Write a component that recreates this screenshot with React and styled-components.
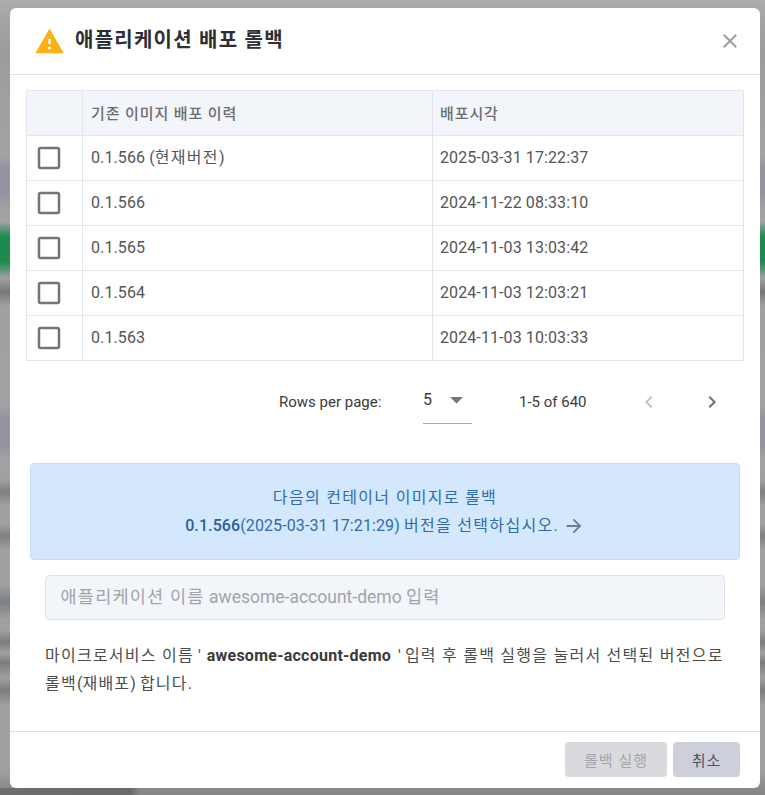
import React from "react";
import styled, { createGlobalStyle } from "styled-components";

const Global = createGlobalStyle`
  html, body { margin: 0; padding: 0; height: 100%; }
  body {
    overflow: hidden;
    font-family: Roboto, "Noto Sans CJK KR", sans-serif;
    background:
      linear-gradient(90deg, #6e6e6e 0, #6a6a6a 130px, rgba(128,128,128,0) 140px) 0 788px / 100% 7px no-repeat,
      linear-gradient(180deg,
        #acacac 0, #a5a5a5 20px, #9c9c9c 50px, #a3a3a3 155px, #9494a2 168px, #9494a2 195px, #a2a2a2 208px,
        #a2a2a2 222px, #1f8a4e 236px, #1f8a4e 262px, #a0a0a0 278px, #777 292px, #a0a0a0 306px,
        #a2a2a2 405px, #9494a2 418px, #9494a2 445px, #a2a2a2 458px, #a0a0a0 480px, #7c8084 492px, #a0a0a0 506px,
        #a0a0a0 524px, #808080 536px, #a0a0a0 550px, #a0a0a0 585px, #7c8084 602px, #a0a0a0 620px,
        #a0a0a0 630px, #7c7c7c 642px, #a0a0a0 653px, #7c7c7c 663px, #a0a0a0 678px, #7c7c7c 690px, #a0a0a0 705px,
        #a0a0a0 770px, #8a8a8a 788px, #868686 795px);
  }
`;

const Page = styled.div`
  padding: 8px 0 0 10px;
`;

const Modal = styled.div`
  width: 750px;
  height: 780px;
  background: #fff;
  border-radius: 6px;
  display: flex;
  flex-direction: column;
  color: #4a4a4a;
`;

const Header = styled.header`
  height: 67px;
  box-sizing: border-box;
  border-bottom: 1px solid #e0e0e2;
  display: flex;
  align-items: flex-start;
  padding: 18px 18px 0 24px;
  flex: none;
`;

const WarnIcon = styled.svg`
  width: 31px;
  height: 31px;
  fill: #fdb013;
  flex: none;
`;

const Title = styled.h2`
  margin: 0 0 0 10px;
  font-size: 20px;
  line-height: 28px;
  font-weight: 700;
  color: #2d2f33;
  flex: 1;
  --ko: 0.062em;
`;

const CloseIcon = styled.svg`
  width: 24px;
  height: 24px;
  fill: #9e9e9e;
  margin-top: 3px;
`;

const Body = styled.div`
  flex: 1;
  padding: 15px 16px 0;
  min-height: 0;
`;

const Table = styled.table`
  border-collapse: collapse;
  table-layout: fixed;
  width: 717px;
  font-size: 16px;
  letter-spacing: 0.1px;
  color: #555;
`;

const Th = styled.th`
  height: 45px;
  padding: 0 8px 2px;
  box-sizing: border-box;
  background: #f2f5f9;
  border: 1px solid #e3e6ea;
  text-align: left;
  font-weight: 500;
  font-size: 15px;
  color: #6a6c70;
  --ko: 0.06em;
  &:last-child { padding-left: 7px; }
`;

const Td = styled.td`
  height: 44px;
  padding: 0 8px;
  border: 1px solid #e3e6ea;
  line-height: 24px;
  &:last-child { padding-left: 7px; }
`;

const CheckCell = styled(Td)`
  padding: 0;
`;

const CheckIcon = styled.svg`
  width: 30px;
  height: 30px;
  fill: #757575;
  display: block;
  margin-left: 7px;
`;

const Pagination = styled.div`
  height: 80px;
  display: flex;
  align-items: flex-start;
  font-size: 15px;
  color: #3a3a3a;
  padding-left: 253px;
`;

const RowsLabel = styled.span`
  margin-top: 31px;
  line-height: 20px;
  width: 144px;
  flex: none;
`;

const PageSelect = styled.div`
  width: 49px;
  height: 43px;
  margin-top: 20px;
  box-sizing: border-box;
  border-bottom: 1px solid #a9a9a9;
  display: flex;
  flex: none;
  align-items: flex-start;
  padding-top: 9px;
  font-size: 16px;
  line-height: 20px;
  justify-content: space-between;
`;

const CaretIcon = styled.svg`
  width: 31px;
  height: 31px;
  fill: #757575;
  margin-top: -6px;
`;

const PageRange = styled.span`
  margin: 31px 0 0 47px;
  line-height: 20px;
  width: 118px;
  flex: none;
`;

const PagerIcon = styled.svg`
  width: 24px;
  height: 24px;
  fill: ${(p) => (p.$off ? "#c4c4c4" : "#707070")};
  margin-top: 29px;
  margin-left: ${(p) => p.$gap}px;
  flex: none;
`;

const Notice = styled.div`
  margin: 22px 4px 0;
  height: 97px;
  box-sizing: border-box;
  background: #d4e8fd;
  border: 1px solid #c2ddf8;
  border-radius: 4px;
  text-align: center;
  font-size: 16px;
  line-height: 28px;
  letter-spacing: 0.1px;
  color: #2f6cab;
  padding-top: 20px;
`;

const Strong = styled.span`
  font-weight: 500;
  color: #2a5f9b;
`;

const ArrowIcon = styled.svg`
  width: 22px;
  height: 22px;
  fill: #757a80;
  vertical-align: -6px;
  margin-left: 5px;
`;

const Field = styled.div`
  margin: 15px 19px 0;
  height: 45px;
  box-sizing: border-box;
  background: #f2f5f9;
  border: 1px solid #dfe3e8;
  border-radius: 4px;
  padding: 0 14.5px;
  font-size: 17.5px;
  line-height: 43px;
  color: #a1a4a8;
  --ko: 0.07em;
`;

const Help = styled.p`
  margin: 22px 19px 0;
  font-size: 16px;
  line-height: 28px;
  color: #4c4c4c;
  word-break: keep-all;
  --ko: 0.078em;
`;

const Bold = styled.b`
  font-weight: 700;
  color: #3a3a3a;
  letter-spacing: 0.25px;
  margin: 0 3px 0 2px;
`;

const Footer = styled.footer`
  height: 57px;
  box-sizing: border-box;
  flex: none;
  border-top: 1px solid #e0e0e2;
  display: flex;
  justify-content: flex-end;
  gap: 6px;
  padding: 10px 20px 0;
`;

const Button = styled.button`
  height: 35px;
  width: ${(p) => p.$w}px;
  border: 0;
  border-radius: 4px;
  padding: 0;
  font: 400 15px Roboto, "Noto Sans CJK KR", sans-serif;
  background: ${(p) => (p.disabled ? "#d9dadd" : "#cdd0da")};
  color: ${(p) => (p.disabled ? "#a3a5a9" : "#4a5163")};
  --ko: 0.07em;
`;

const Hangul = styled.span`
  letter-spacing: var(--ko, 0.082em);
`;

/* The Korean runs are set wider than the Latin ones in the reference. */
function T({ children }) {
  return String(children)
    .split(/([가-힣]+(?: [가-힣]+)*)/)
    .map((part, i) => (i % 2 ? <Hangul key={i}>{part}</Hangul> : part));
}

const rows = [
  ["0.1.566 (현재버전)", "2025-03-31 17:22:37"],
  ["0.1.566", "2024-11-22 08:33:10"],
  ["0.1.565", "2024-11-03 13:03:42"],
  ["0.1.564", "2024-11-03 12:03:21"],
  ["0.1.563", "2024-11-03 10:03:33"],
];

export default function App() {
  return (
    <>
      <Global />
      <Page>
        <Modal>
          <Header>
            <WarnIcon viewBox="0 0 24 24"><path d="M1 21h22L12 2 1 21zm12-3h-2v-2h2v2zm0-4h-2v-4h2v4z" /></WarnIcon>
            <Title><T>애플리케이션 배포 롤백</T></Title>
            <CloseIcon viewBox="0 0 24 24"><path d="M19 6.41 17.59 5 12 10.59 6.41 5 5 6.41 10.59 12 5 17.59 6.41 19 12 13.41 17.59 19 19 17.59 13.41 12z" /></CloseIcon>
          </Header>
          <Body>
            <Table>
              <colgroup>
                <col style={{ width: 56 }} />
                <col style={{ width: 350 }} />
                <col style={{ width: 311 }} />
              </colgroup>
              <thead>
                <tr>
                  <Th />
                  <Th><T>기존 이미지 배포 이력</T></Th>
                  <Th><T>배포시각</T></Th>
                </tr>
              </thead>
              <tbody>
                {rows.map(([version, time], i) => (
                  <tr key={i}>
                    <CheckCell>
                      <CheckIcon viewBox="0 0 24 24"><path d="M19 5v14H5V5h14m0-2H5c-1.1 0-2 .9-2 2v14c0 1.1.9 2 2 2h14c1.1 0 2-.9 2-2V5c0-1.1-.9-2-2-2z" /></CheckIcon>
                    </CheckCell>
                    <Td><T>{version}</T></Td>
                    <Td>{time}</Td>
                  </tr>
                ))}
              </tbody>
            </Table>
            <Pagination>
              <RowsLabel>Rows per page:</RowsLabel>
              <PageSelect>
                <span>5</span>
                <CaretIcon viewBox="0 0 24 24"><path d="M7 10l5 5 5-5z" /></CaretIcon>
              </PageSelect>
              <PageRange>1-5 of 640</PageRange>
              <PagerIcon $off $gap={0} viewBox="0 0 24 24"><path d="M15.41 7.41 14 6l-6 6 6 6 1.41-1.41L10.83 12z" /></PagerIcon>
              <PagerIcon $gap={39} viewBox="0 0 24 24"><path d="M10 6 8.59 7.41 13.17 12l-4.58 4.59L10 18l6-6z" /></PagerIcon>
            </Pagination>
            <Notice>
              <T>다음의 컨테이너 이미지로 롤백</T><br />
              <Strong>0.1.566</Strong><T>(2025-03-31 17:21:29) 버전을 선택하십시오.</T>
              <ArrowIcon viewBox="0 0 24 24"><path d="M12 4l-1.41 1.41L16.17 11H4v2h12.17l-5.58 5.59L12 20l8-8z" /></ArrowIcon>
            </Notice>
            <Field><T>애플리케이션 이름 awesome-account-demo 입력</T></Field>
            <Help>
              <T>마이크로서비스 이름 ' </T><Bold>awesome-account-demo</Bold><T> ' 입력 후 롤백 실행을 눌러서 선택된 버전으로 롤백(재배포) 합니다.</T>
            </Help>
          </Body>
          <Footer>
            <Button disabled $w={102}><T>롤백 실행</T></Button>
            <Button $w={67}><T>취소</T></Button>
          </Footer>
        </Modal>
      </Page>
    </>
  );
}
